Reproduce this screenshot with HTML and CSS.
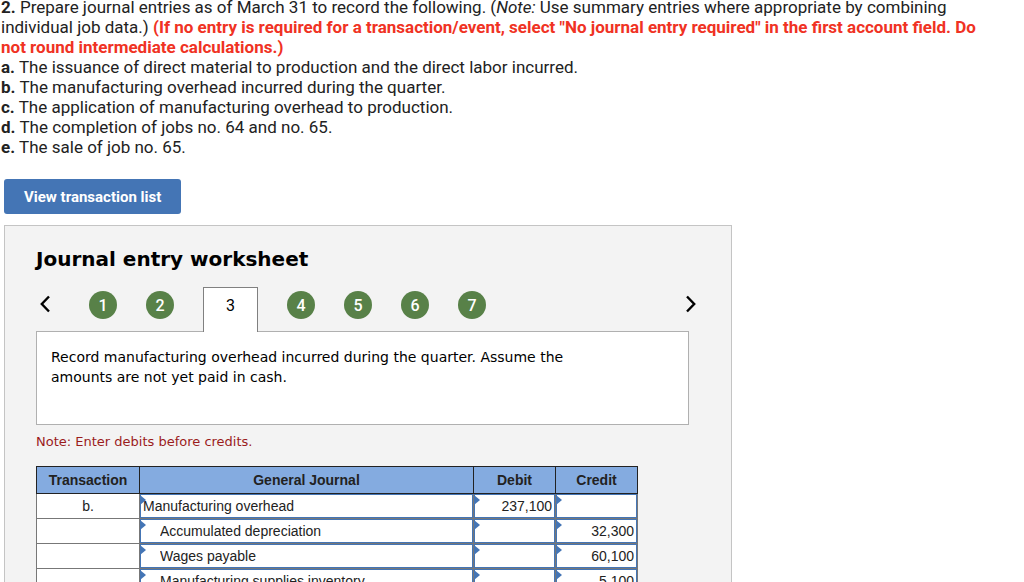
FILE: index.html
```html
<!DOCTYPE html>
<html lang="en">

<head>
    <meta charset="UTF-8">
    <meta name="viewport" content="width=device-width, initial-scale=1.0">
    <title>Journal entry worksheet</title>
    <link rel="stylesheet" href="styles.css">
</head>

<body>
    <div class="question">
        <p><b>2.</b> Prepare journal entries as of March 31 to record the following. (<i>Note:</i> Use summary entries where appropriate by combining<br>
            individual job data.) <strong class="warning">(If no entry is required for a transaction/event, select "No journal entry required" in the first account field. Do<br>
            not round intermediate calculations.)</strong></p>
        <p><b>a.</b> The issuance of direct material to production and the direct labor incurred.</p>
        <p><b>b.</b> The manufacturing overhead incurred during the quarter.</p>
        <p><b>c.</b> The application of manufacturing overhead to production.</p>
        <p><b>d.</b> The completion of jobs no. 64 and no. 65.</p>
        <p><b>e.</b> The sale of job no. 65.</p>
    </div>

    <button type="button" class="view-list">View transaction list</button>

    <section class="worksheet">
        <h1>Journal entry worksheet</h1>

        <nav class="steps">
            <button type="button" class="arrow prev" aria-label="Previous">
                <svg width="10" height="18" viewBox="0 0 10 18"><path d="M9 1.5 L1.8 9 L9 16.5" /></svg>
            </button>
            <button type="button" class="step">1</button>
            <button type="button" class="step">2</button>
            <button type="button" class="step current">3</button>
            <button type="button" class="step">4</button>
            <button type="button" class="step">5</button>
            <button type="button" class="step">6</button>
            <button type="button" class="step">7</button>
            <button type="button" class="arrow next" aria-label="Next">
                <svg width="10" height="18" viewBox="0 0 10 18"><path d="M1 1.5 L8.2 9 L1 16.5" /></svg>
            </button>
        </nav>

        <div class="prompt">
            <p>Record manufacturing overhead incurred during the quarter. Assume the amounts are not yet paid in cash.</p>
        </div>

        <p class="note">Note: Enter debits before credits.</p>

        <table class="journal">
            <colgroup>
                <col class="col-transaction">
                <col class="col-account">
                <col class="col-amount">
                <col class="col-amount">
            </colgroup>
            <thead>
                <tr>
                    <th>Transaction</th>
                    <th>General Journal</th>
                    <th>Debit</th>
                    <th>Credit</th>
                </tr>
            </thead>
            <tbody>
                <tr>
                    <td>b.</td>
                    <td class="entry"><input type="text" aria-label="Account 1" value="Manufacturing overhead"></td>
                    <td class="entry"><input type="text" class="amount" aria-label="Debit 1" value="237,100"></td>
                    <td class="entry"><input type="text" class="amount" aria-label="Credit 1"></td>
                </tr>
                <tr>
                    <td></td>
                    <td class="entry"><input type="text" class="indent" aria-label="Account 2" value="Accumulated depreciation"></td>
                    <td class="entry"><input type="text" class="amount" aria-label="Debit 2"></td>
                    <td class="entry"><input type="text" class="amount" aria-label="Credit 2" value="32,300"></td>
                </tr>
                <tr>
                    <td></td>
                    <td class="entry"><input type="text" class="indent" aria-label="Account 3" value="Wages payable"></td>
                    <td class="entry"><input type="text" class="amount" aria-label="Debit 3"></td>
                    <td class="entry"><input type="text" class="amount" aria-label="Credit 3" value="60,100"></td>
                </tr>
                <tr>
                    <td></td>
                    <td class="entry"><input type="text" class="indent" aria-label="Account 4" value="Manufacturing supplies inventory"></td>
                    <td class="entry"><input type="text" class="amount" aria-label="Debit 4"></td>
                    <td class="entry"><input type="text" class="amount" aria-label="Credit 4" value="5,100"></td>
                </tr>
            </tbody>
        </table>
    </section>
</body>

</html>
```
FILE: styles.css
```css
* {
    box-sizing: border-box;
}

body {
    margin: 0;
    background-color: #fff;
    color: #222;
    font-family: Roboto, sans-serif;
}

p {
    margin: 0;
}

button {
    border: none;
    padding: 0;
    cursor: pointer;
    font-family: Roboto, sans-serif;
}

/* Question text */
.question {
    margin: -3px 0 0 1px;
    font-size: 17px;
    line-height: 20px;
}

.warning {
    color: #f03223;
}

.view-list {
    display: block;
    margin: 22px 0 0 4px;
    padding: 0 20px;
    height: 35px;
    border-radius: 3px;
    background-color: #4475b5;
    color: #fff;
    font-size: 15px;
    font-weight: bold;
}

/* Worksheet panel */
.worksheet {
    max-width: 728px;
    margin: 11px 4px 0;
    padding: 20px 42px 24px 31px;
    border: 1px solid #c4c4c4;
    background-color: #f3f3f3;
    color: #000;
    font-family: Verdana, "DejaVu Sans", sans-serif;
}

.worksheet h1 {
    margin: 0;
    font-size: 20px;
    line-height: 26px;
}

/* Step navigation */
.steps {
    display: flex;
    align-items: flex-end;
    gap: 29px;
    margin-top: 15px;
    padding-left: 4px;
}

.step {
    width: 28px;
    height: 28px;
    margin-bottom: 12px;
    border-radius: 50%;
    background-color: #588148;
    color: #fff;
    font-size: 16px;
    font-weight: 500;
}

/* The open step hangs over the top border of the prompt box */
.step.current {
    position: relative;
    width: 55px;
    height: 45px;
    margin-bottom: -1px;
    padding-bottom: 9px;
    border: 1px solid #808080;
    border-bottom: none;
    border-radius: 0;
    background-color: #fff;
    color: #000;
    font-weight: 400;
}

.arrow {
    width: 10px;
    height: 18px;
    margin-bottom: 18px;
    background: none;
}

.prev {
    margin-right: 10px;
}

.next {
    margin-left: auto;
    margin-right: -7px;
}

.arrow svg {
    display: block;
    fill: none;
    stroke: #000;
    stroke-width: 2.4;
}

.prompt {
    min-height: 94px;
    padding: 15px 96px 14px 14px;
    border: 1px solid #b0b0b0;
    background-color: #fff;
    font-size: 14px;
    line-height: 20px;
}

.note {
    margin-top: 7px;
    color: #9b1c1c;
    font-size: 13px;
    line-height: 20px;
}

/* Journal table */
.journal {
    width: 602px;
    margin-top: 14px;
    border-collapse: collapse;
    table-layout: fixed;
    background-color: #fff;
    color: #222;
    font-family: Arial, "Liberation Sans", sans-serif;
    font-size: 14px;
}

.col-transaction {
    width: 103px;
}

.col-account {
    width: 334px;
}

.journal th {
    height: 27px;
    padding: 0 0 1px;
    border: 1px solid #222;
    background-color: #84abe0;
}

.journal td {
    height: 25px;
    padding: 0 0 1px;
    border: 1px solid #777;
    text-align: center;
}

.journal .entry {
    position: relative;
    padding: 0;
}

.entry input {
    display: block;
    width: 100%;
    height: 24px;
    padding: 0 2px 1px;
    border: 1px solid #4475b5;
    border-radius: 0;
    background-color: #fff;
    color: #222;
    font-family: inherit;
    font-size: 14px;
}

.entry .indent {
    padding-left: 19px;
}

.entry .amount {
    text-align: right;
}

/* Blue corner flag of an editable cell */
.entry::before {
    content: "";
    position: absolute;
    top: 1px;
    left: 0;
    border: solid transparent;
    border-width: 5px 0 5px 6px;
    border-left-color: #4475b5;
}
```
